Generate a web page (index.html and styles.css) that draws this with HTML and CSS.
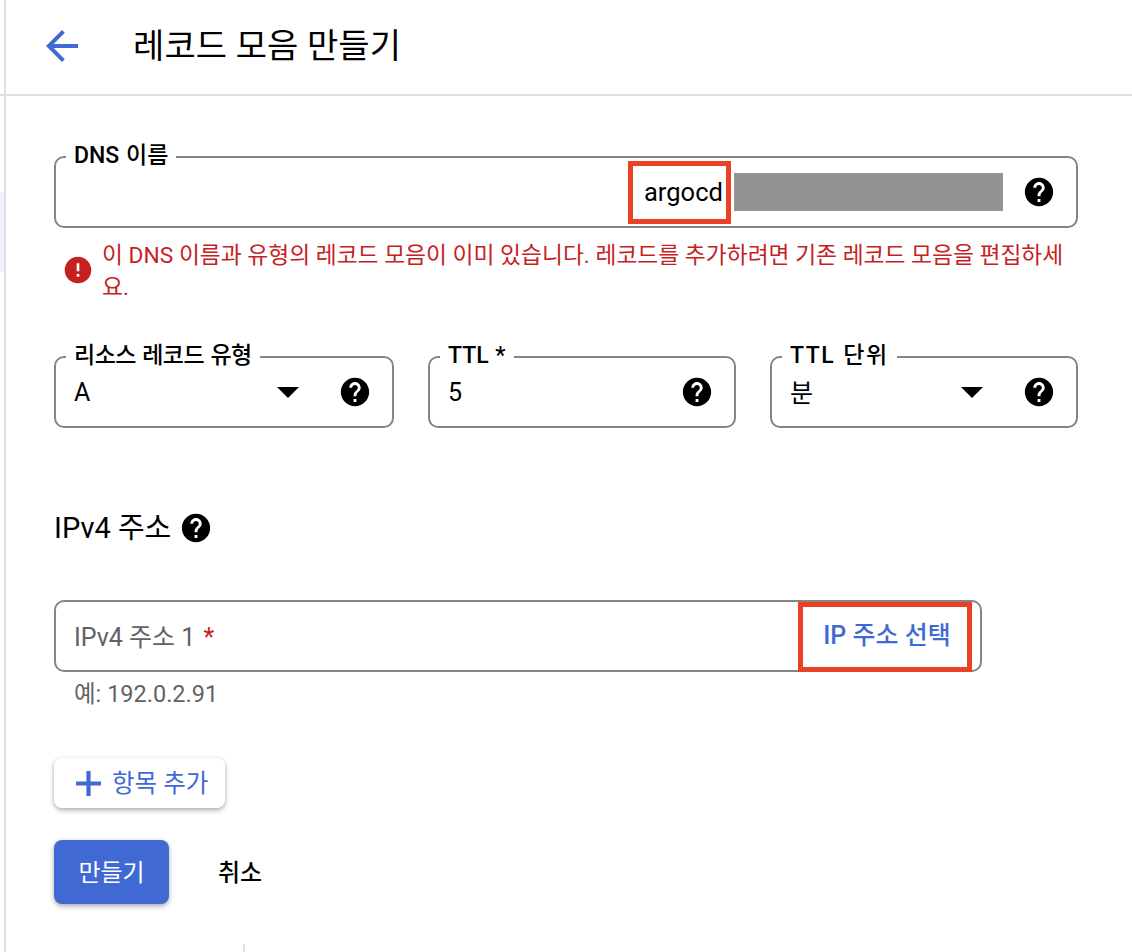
FILE: index.html
```html
<!DOCTYPE html>
<html lang="ko">
<head>
    <meta charset="UTF-8">
    <title>레코드 모음 만들기</title>
    <link rel="stylesheet" href="styles.css">
</head>
<body>
    <svg class="icon-defs" width="0" height="0">
        <symbol id="help" viewBox="0 0 24 24">
            <path d="M12 2C6.48 2 2 6.48 2 12s4.48 10 10 10 10-4.48 10-10S17.52 2 12 2zm1 17h-2v-2h2v2zm2.07-7.75l-.9.92C13.45 12.9 13 13.5 13 15h-2v-.5c0-1.1.45-2.1 1.17-2.83l1.24-1.26c.37-.36.59-.86.59-1.41 0-1.1-.9-2-2-2s-2 .9-2 2H8c0-2.21 1.79-4 4-4s4 1.79 4 4c0 .88-.36 1.68-.93 2.25z"/>
        </symbol>
    </svg>

    <div class="rail"><div class="rail-active"></div></div>

    <div class="page">
        <header class="topbar">
            <svg class="back" viewBox="0 0 24 24"><path d="M20 11H7.83l5.59-5.59L12 4l-8 8 8 8 1.41-1.41L7.83 13H20v-2z"/></svg>
            <h1>레코드 모음 만들기</h1>
        </header>

        <main class="form">
            <!-- DNS name -->
            <div class="field field-dns">
                <span class="legend">DNS 이름</span>
                <span class="mark mark-name">argocd</span>
                <span class="redacted"></span>
                <svg class="help"><use href="#help"/></svg>
            </div>
            <div class="error">
                <svg class="error-icon" viewBox="0 0 24 24"><path d="M12 2C6.48 2 2 6.48 2 12s4.48 10 10 10 10-4.48 10-10S17.52 2 12 2zm1 15h-2v-2h2v2zm0-4h-2V7h2v6z"/></svg>
                <p>이 DNS 이름과 유형의 레코드 모음이 이미 있습니다. 레코드를 추가하려면 기존 레코드 모음을 편집하세요.</p>
            </div>

            <!-- Type, TTL, unit -->
            <div class="field-row">
                <div class="field field-type">
                    <span class="legend">리소스 레코드 유형</span>
                    <span class="value">A</span>
                    <span class="caret"></span>
                    <svg class="help"><use href="#help"/></svg>
                </div>
                <div class="field field-ttl">
                    <span class="legend">TTL *</span>
                    <span class="value">5</span>
                    <svg class="help"><use href="#help"/></svg>
                </div>
                <div class="field field-unit">
                    <span class="legend">TTL 단위</span>
                    <span class="value">분</span>
                    <span class="caret"></span>
                    <svg class="help"><use href="#help"/></svg>
                </div>
            </div>

            <h2 class="section-title">IPv4 주소 <svg class="help"><use href="#help"/></svg></h2>

            <div class="field field-ip">
                <span class="placeholder">IPv4 주소 1 <span class="required">*</span></span>
                <span class="mark mark-ip">IP 주소 선택</span>
            </div>
            <div class="hint">예: 192.0.2.91</div>

            <button class="btn-add">
                <svg class="plus" viewBox="0 0 24 24"><path d="M0 10h10V0h4v10h10v4H14v10h-4V14H0z"/></svg>
                항목 추가
            </button>

            <div class="actions">
                <button class="btn-create">만들기</button>
                <button class="btn-cancel">취소</button>
            </div>
        </main>

        <div class="bottom-tick"></div>
    </div>
</body>
</html>
```

FILE: styles.css
```css
* {
    box-sizing: border-box;
}

html, body {
    height: 100%;
}

body {
    margin: 0;
    display: flex;
    overflow: hidden;
    background: #fff;
    color: #000;
    font-family: Roboto, "Noto Sans CJK KR", sans-serif;
}

.icon-defs {
    position: absolute;
}

/* Left nav edge */
.rail {
    flex: none;
    width: 6px;
    padding-top: 192px;
    border-right: 2px solid #e0e0e0;
}

.rail-active {
    height: 80px;
    background: #eef3fc;
}

.page {
    flex: 1;
    display: flex;
    flex-direction: column;
    min-width: 0;
}

.topbar {
    flex: none;
    display: flex;
    align-items: center;
    height: 96px;
    margin-left: -6px;
    padding-left: 38px;
    padding-bottom: 2px;
    border-bottom: 2px solid #e0e0e0;
}

.back {
    width: 48px;
    height: 48px;
    fill: #4169d3;
}

.topbar h1 {
    margin: 0 0 5px 47px;
    font-size: 34px;
    font-weight: 400;
    letter-spacing: 0.1px;
}

.form {
    flex: 1;
    padding: 60px 54px 0 48px;
}

/* Outlined fields */
.field {
    position: relative;
    display: flex;
    align-items: center;
    height: 72px;
    padding: 0 20px 0 18px;
    border: 2px solid #80868b;
    border-radius: 10px;
}

.legend {
    position: absolute;
    top: -14px;
    left: 10px;
    padding: 0 8px;
    background: #fff;
    font-size: 23px;
    font-weight: 500;
    line-height: 24px;
    word-spacing: 1px;
}

.field-type .legend {
    letter-spacing: -0.5px;
}

.field-unit .legend {
    letter-spacing: 1.5px;
}

.value {
    flex: 1;
    font-size: 25px;
}

.field-unit .value {
    margin-bottom: 3px;
}

.help {
    flex: none;
    width: 34px;
    height: 34px;
    fill: #000;
}

.caret {
    flex: none;
    width: 0;
    height: 0;
    margin-right: 39px;
    border-left: 11px solid transparent;
    border-right: 11px solid transparent;
    border-top: 11px solid #000;
}

/* Annotation boxes */
.mark {
    border: 5px solid #ea4025;
}

.field-dns {
    justify-content: flex-end;
}

.mark-name {
    display: flex;
    align-items: center;
    width: 103px;
    height: 63px;
    padding-left: 11px;
    font-size: 25.5px;
}

.redacted {
    width: 269px;
    height: 38px;
    margin: 0 19px 0 3px;
    background: #939393;
}

.error {
    display: flex;
    align-items: flex-start;
    margin: 12px 0 0 8px;
    color: #c5221f;
}

.error-icon {
    flex: none;
    width: 32px;
    height: 32px;
    margin-top: 14px;
    fill: #c5221f;
}

.error p {
    margin: 0 0 0 8px;
    font-size: 22.75px;
    line-height: 32px;
}

.field-row {
    display: flex;
    gap: 34px;
    margin-top: 52px;
}

.field-type {
    width: 340px;
}

.field-ttl {
    width: 308px;
}

.field-unit {
    width: 308px;
}

.section-title {
    display: flex;
    align-items: center;
    gap: 8px;
    margin: 83px 0 0;
    font-size: 29px;
    font-weight: 400;
    line-height: 34px;
}

.field-ip {
    justify-content: space-between;
    width: 928px;
    margin-top: 55px;
    padding-right: 8px;
}

.placeholder {
    margin-bottom: 3px;
    font-size: 25px;
    color: #5f6368;
}

.required {
    color: #c5221f;
    margin-left: 2px;
}

.mark-ip {
    display: flex;
    align-items: center;
    justify-content: center;
    align-self: stretch;
    width: 174px;
    margin-bottom: -2px;
    padding: 0 0 8px 4px;
    color: #4169d3;
    font-size: 25px;
    font-weight: 500;
}

.hint {
    margin: 7px 0 0 20px;
    color: #5f6368;
    font-size: 23.5px;
    line-height: 30px;
}

/* Buttons */
button {
    border: none;
    font-family: inherit;
    cursor: pointer;
}

.btn-add {
    display: flex;
    align-items: center;
    gap: 11px;
    width: 171px;
    height: 50px;
    margin-top: 49px;
    padding: 0 0 3px 22px;
    background: #fff;
    border-radius: 8px;
    color: #4169d3;
    font-size: 24.5px;
    box-shadow: 0 2px 5px rgba(0, 0, 0, 0.35);
}

.plus {
    flex: none;
    width: 25px;
    height: 25px;
    margin-top: 3px;
    fill: #4169d3;
}

.actions {
    display: flex;
    align-items: center;
    margin-top: 32px;
}

.btn-create {
    width: 115px;
    height: 64px;
    padding: 0 0 3px;
    background: #4169d3;
    border-radius: 8px;
    color: #fff;
    font-size: 24px;
    box-shadow: 0 2px 5px rgba(0, 0, 0, 0.35);
}

.btn-cancel {
    margin-left: 49px;
    padding: 0 0 4px;
    background: none;
    color: #000;
    font-size: 24px;
    font-weight: 500;
}

.bottom-tick {
    flex: none;
    width: 2px;
    height: 8px;
    margin-left: 237px;
    background: #e0e0e0;
}
```
